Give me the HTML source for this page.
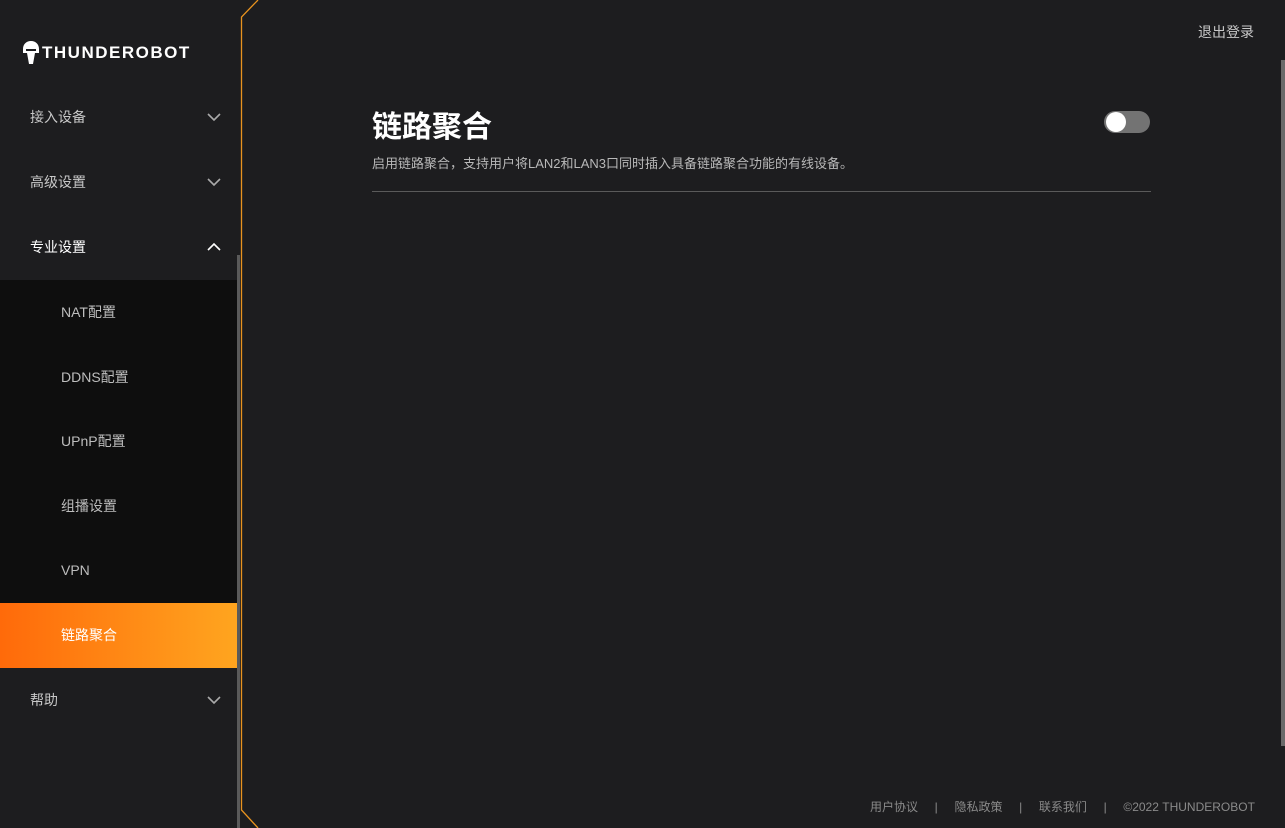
<!DOCTYPE html>
<html><head><meta charset="utf-8"><style>
*{margin:0;padding:0;box-sizing:border-box}
body{width:1285px;height:828px;background:#1d1d1f;overflow:hidden;position:relative;font-family:"Liberation Sans","Noto Sans CJK SC",sans-serif;color:#c8c8c8}
.side{position:absolute;left:0;top:0;width:237px;height:828px;background:#1d1d1f}
.logo{position:absolute;left:22px;top:40px;display:flex;align-items:center;color:#fff;font-weight:bold;font-size:17px;letter-spacing:1.5px}
.item{position:absolute;left:0;width:237px;height:65px;font-size:14px;color:#c8c8c8;padding-left:30px;line-height:65px}
.item.top{color:#fff}
.chev{position:absolute;right:16px;top:27px}
.sub{position:absolute;left:0;top:280px;width:237px;height:388px;background:#0e0e0e}
.sub div{height:64.6px;line-height:64px;padding-left:61px;font-size:14px;color:#bdbdbd}
.sub .act{background:linear-gradient(90deg,#ff6a0a,#ffa51f);color:#fff}
.sb{position:absolute;left:237px;top:255px;width:3px;height:573px;background:#5a5a5a}
</style></head><body>
<div class="side">
<div class="logo"><svg width="18" height="26" viewBox="0 0 18 26"><path d="M9 1C4 1 1 4.5 1 9v4h4l2 11h4l2-11h4V9C17 4.5 14 1 9 1z" fill="#fff"/><path d="M4 10h10" stroke="#1d1d1f" stroke-width="2"/></svg><span style="margin-left:2px">THUNDEROBOT</span></div>
<div class="item" style="top:85px">接入设备<svg class="chev" width="14" height="10"><path d="M1 2l6 6 6-6" stroke="#aaa" stroke-width="1.6" fill="none"/></svg></div>
<div class="item" style="top:150px">高级设置<svg class="chev" width="14" height="10"><path d="M1 2l6 6 6-6" stroke="#aaa" stroke-width="1.6" fill="none"/></svg></div>
<div class="item top" style="top:215px">专业设置<svg class="chev" width="14" height="10"><path d="M1 8l6-6 6 6" stroke="#fff" stroke-width="1.6" fill="none"/></svg></div>
<div class="sub"><div>NAT配置</div><div>DDNS配置</div><div>UPnP配置</div><div>组播设置</div><div>VPN</div><div class="act">链路聚合</div></div>
<div class="item" style="top:668px">帮助<svg class="chev" width="14" height="10"><path d="M1 2l6 6 6-6" stroke="#aaa" stroke-width="1.6" fill="none"/></svg></div>
</div>
<div class="sb"></div>
<svg style="position:absolute;left:238px;top:0" width="30" height="828"><path d="M20 0L3.5 17V810L20 828" stroke="#e8931f" stroke-width="1.3" fill="none"/></svg>
<div style="position:absolute;right:0;top:60px;width:4px;height:686px;background:#6a6a6a"></div>
<div style="position:absolute;left:1198px;top:22px;font-size:14px;color:#c8c8c8">退出登录</div>
<div style="position:absolute;left:372px;top:102px;font-size:30px;font-weight:bold;color:#fff">链路聚合</div>
<div style="position:absolute;left:372px;top:153px;font-size:13px;color:#b8b8b8">启用链路聚合，支持用户将LAN2和LAN3口同时插入具备链路聚合功能的有线设备。</div>
<div style="position:absolute;left:1104px;top:111px;width:46px;height:22px;border-radius:11px;background:#737373"><div style="position:absolute;left:2px;top:1px;width:20px;height:20px;border-radius:50%;background:#fff"></div></div>
<div style="position:absolute;left:372px;top:191px;width:779px;height:1px;background:#5a5a5a"></div>
<div style="position:absolute;left:870px;top:798px;font-size:12px;color:#8a8a8a;white-space:pre">用户协议     |     隐私政策     |     联系我们     |     ©2022 THUNDEROBOT</div>
</body></html>
